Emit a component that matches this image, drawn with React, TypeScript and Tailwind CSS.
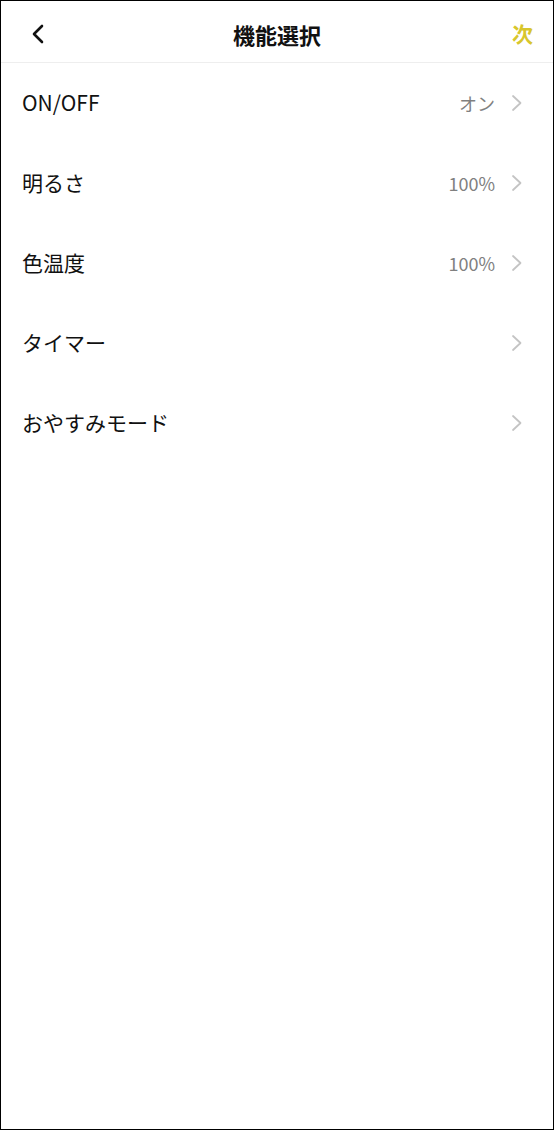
import React from "react";

const rows = [
  { label: "ON/OFF", value: "オン" },
  { label: "明るさ", value: "100%" },
  { label: "色温度", value: "100%" },
  { label: "タイマー", value: "" },
  { label: "おやすみモード", value: "" },
];

function Chevron() {
  return (
    <svg width="12" height="18" viewBox="0 0 12 18" fill="none" className="shrink-0">
      <path d="M2 2L9.5 9L2 16" stroke="#c4c4c4" strokeWidth="1.8" strokeLinecap="round" strokeLinejoin="round" />
    </svg>
  );
}

export default function App() {
  return (
    <div
      className="w-[554px] h-[1130px] bg-white border border-black flex flex-col"
      style={{ fontFamily: '"Noto Sans CJK JP", "Noto Sans", sans-serif' }}
    >
      <header className="h-[62px] shrink-0 border-b border-[#eeeeee] grid grid-cols-[1fr_auto_1fr] items-center px-[20px] pt-[4px]">
        <button type="button" className="ml-[10px] flex items-center justify-self-start">
          <svg width="14" height="20" viewBox="0 0 14 20" fill="none">
            <path d="M11 2L3 10L11 18" stroke="#111111" strokeWidth="2.6" strokeLinecap="round" strokeLinejoin="round" />
          </svg>
        </button>
        <h1 className="text-[22px] font-bold text-[#111111] leading-none">機能選択</h1>
        <button type="button" className="justify-self-end text-[21px] font-bold text-[#d8c62c] leading-none">
          次
        </button>
      </header>

      <ul className="flex flex-col">
        {rows.map((row) => (
          <li key={row.label} className="h-[80px] flex items-center justify-between pl-[21px] pr-[30px]">
            <span className="text-[21px] text-[#111111]">{row.label}</span>
            <div className="flex items-center gap-[16px]">
              {row.value && <span className="text-[18px] text-[#808080]">{row.value}</span>}
              <Chevron />
            </div>
          </li>
        ))}
      </ul>
    </div>
  );
}
